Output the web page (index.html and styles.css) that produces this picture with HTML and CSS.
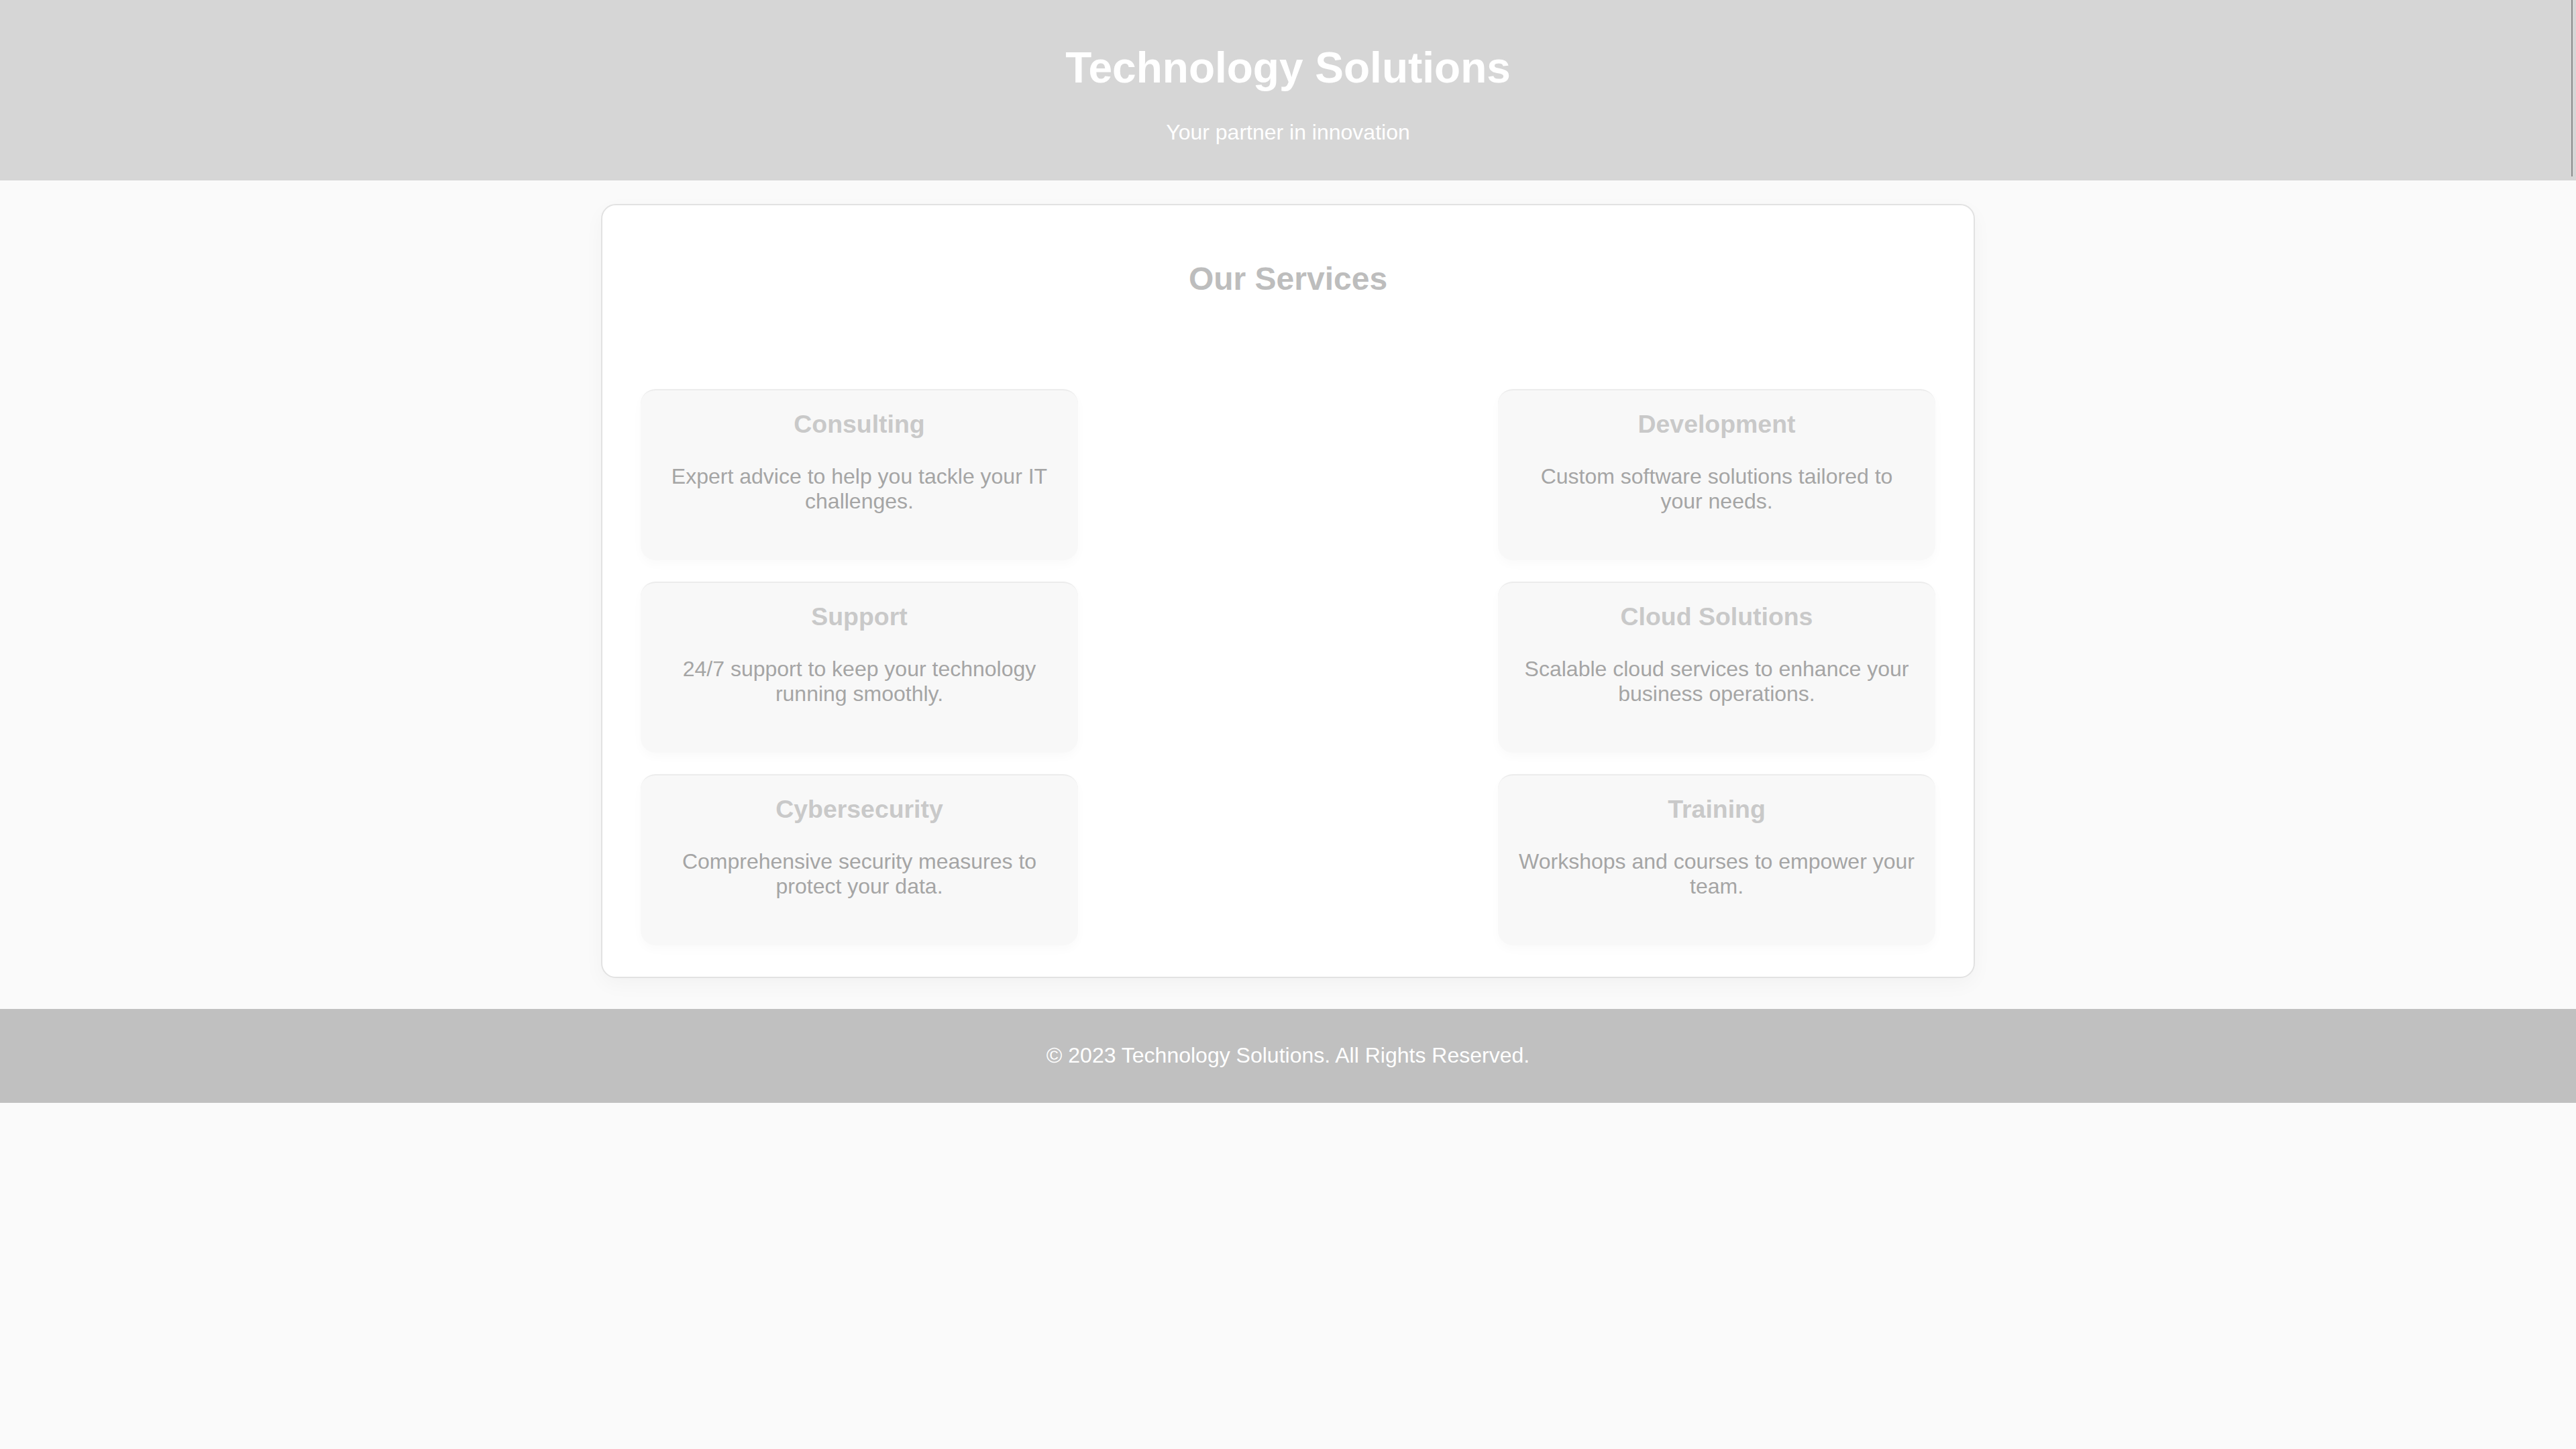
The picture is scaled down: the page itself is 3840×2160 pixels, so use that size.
FILE: index.html
```html
<!DOCTYPE html>
<html lang="en">
<head>
<meta charset="utf-8">
<title>Technology Solutions</title>
<link rel="stylesheet" href="styles.css">
</head>
<body>
<header class="site-header">
  <h1 class="site-title">Technology Solutions</h1>
  <p class="site-tagline">Your partner in innovation</p>
</header>
<main class="main">
  <section class="services">
    <h2 class="services-title">Our Services</h2>
    <div class="service-list">
      <div class="service-card">
        <h3 class="service-name">Consulting</h3>
        <p class="service-desc">Expert advice to help you tackle your IT challenges.</p>
      </div>
      <div class="service-card">
        <h3 class="service-name">Development</h3>
        <p class="service-desc">Custom software solutions tailored to your needs.</p>
      </div>
      <div class="service-card">
        <h3 class="service-name">Support</h3>
        <p class="service-desc">24/7 support to keep your technology running smoothly.</p>
      </div>
      <div class="service-card">
        <h3 class="service-name">Cloud Solutions</h3>
        <p class="service-desc">Scalable cloud services to enhance your business operations.</p>
      </div>
      <div class="service-card">
        <h3 class="service-name">Cybersecurity</h3>
        <p class="service-desc">Comprehensive security measures to protect your data.</p>
      </div>
      <div class="service-card">
        <h3 class="service-name">Training</h3>
        <p class="service-desc">Workshops and courses to empower your team.</p>
      </div>
    </div>
  </section>
</main>
<footer class="site-footer">
  <p class="footer-text">© 2023 Technology Solutions. All Rights Reserved.</p>
</footer>
</body>
</html>
```

FILE: styles.css
```css
* {
  box-sizing: border-box;
}

html, body {
  margin: 0;
  padding: 0;
}

body {
  background: #fafafa;
  font-family: "Liberation Sans", Arial, sans-serif;
  font-size: 32px;
  min-height: 2160px;
}

.site-header {
  position: relative;
  background: #d6d6d6;
  color: #ffffff;
  text-align: center;
  padding: 22px 0 18px;
  height: 269px;
}

.site-header::after {
  content: "";
  position: absolute;
  right: 5px;
  top: 0;
  bottom: 6px;
  width: 2px;
  background: #8c8c8c;
}

.site-title {
  margin: 42px 0 41px;
  font-size: 64px;
  font-weight: bold;
  line-height: 74px;
}

.site-tagline {
  margin: 0;
  font-size: 32px;
  line-height: 37px;
}

.main {
  padding: 35px 0 46px;
}

.services {
  width: 2048px;
  margin: 0 auto;
  background: #ffffff;
  border: 2px solid #e2e2e2;
  border-radius: 22px;
  box-shadow: 0 10px 30px rgba(0, 0, 0, 0.035);
  padding: 82px 57px 47px;
}

.services-title {
  margin: 0 0 137px;
  text-align: center;
  font-size: 48px;
  line-height: 55px;
  font-weight: bold;
  color: #bdbdbd;
}

.service-list {
  display: flex;
  flex-wrap: wrap;
  justify-content: space-between;
  row-gap: 32px;
}

.service-card {
  width: 652px;
  height: 255px;
  background: #f8f8f8;
  border-top: 2px solid #ececec;
  border-radius: 22px;
  box-shadow: 0 6px 16px rgba(0, 0, 0, 0.025);
  padding: 29px 30px 30px;
  text-align: center;
}

.service-name {
  margin: 0 0 38px;
  font-size: 37.44px;
  line-height: 43px;
  font-weight: bold;
  color: #c9c9c9;
}

.service-desc {
  margin: 0;
  font-size: 32px;
  line-height: 37px;
  color: #a5a5a5;
}

.site-footer {
  background: #c0c0c0;
  color: #ffffff;
  text-align: center;
  padding: 51px 0 52px;
}

.footer-text {
  margin: 0;
  font-size: 32px;
  line-height: 37px;
}
```
